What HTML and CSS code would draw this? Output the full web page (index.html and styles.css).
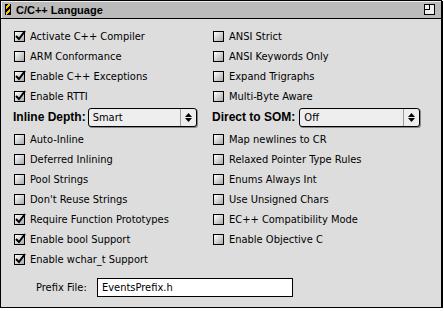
FILE: index.html
```html
<!DOCTYPE html>
<html lang="en">
<head>
  <meta charset="UTF-8">
  <title>C/C++ Language</title>
  <link rel="stylesheet" href="styles.css">
</head>
<body>
  <div class="window">
    <div class="titlebar">
      <span class="grip"></span>
      <span class="title">C/C++ Language</span>
      <span class="zoombox"></span>
    </div>

    <div class="panel">
      <div class="grid">
        <label class="check on"><span class="box"></span>Activate C++ Compiler</label>
        <label class="check"><span class="box"></span>ANSI Strict</label>
        <label class="check"><span class="box"></span>ARM Conformance</label>
        <label class="check"><span class="box"></span>ANSI Keywords Only</label>
        <label class="check on"><span class="box"></span>Enable C++ Exceptions</label>
        <label class="check"><span class="box"></span>Expand Trigraphs</label>
        <label class="check on"><span class="box"></span>Enable RTTI</label>
        <label class="check"><span class="box"></span>Multi-Byte Aware</label>

        <div class="popup-row">
          <span class="popup-label">Inline Depth:</span>
          <div class="popup"><span>Smart</span><span class="arrows"></span></div>
        </div>
        <div class="popup-row som">
          <span class="popup-label">Direct to SOM:</span>
          <div class="popup"><span>Off</span><span class="arrows"></span></div>
        </div>

        <label class="check"><span class="box"></span>Auto-Inline</label>
        <label class="check"><span class="box"></span>Map newlines to CR</label>
        <label class="check"><span class="box"></span>Deferred Inlining</label>
        <label class="check"><span class="box"></span>Relaxed Pointer Type Rules</label>
        <label class="check"><span class="box"></span>Pool Strings</label>
        <label class="check"><span class="box"></span>Enums Always Int</label>
        <label class="check"><span class="box"></span>Don't Reuse Strings</label>
        <label class="check"><span class="box"></span>Use Unsigned Chars</label>
        <label class="check on"><span class="box"></span>Require Function Prototypes</label>
        <label class="check"><span class="box"></span>EC++ Compatibility Mode</label>
        <label class="check on"><span class="box"></span>Enable bool Support</label>
        <label class="check"><span class="box"></span>Enable Objective C</label>
        <label class="check on"><span class="box"></span>Enable wchar_t Support</label>
      </div>

      <div class="prefix">
        <span class="prefix-label">Prefix File:</span>
        <div class="field">EventsPrefix.h</div>
      </div>
    </div>
  </div>
</body>
</html>
```

FILE: styles.css
```css
body {
  margin: 0;
  background: #fff;
  font-family: "DejaVu Sans Condensed", "DejaVu Sans", sans-serif;
  font-size: 11px;
  color: #000;
}
.window {
  width: 440px;
  height: 306px;
  border: 1px solid #000;
  box-shadow: 1px 1px 0 #000;
  background: #dddddd;
  display: flex;
  flex-direction: column;
}
.titlebar {
  height: 17px;
  background: #bbbbbb;
  border-bottom: 1px solid #000;
  display: flex;
  align-items: center;
  padding: 0 4px;
  box-shadow: inset 1px 1px 0 #eee;
}
.grip {
  width: 4px;
  height: 11px;
  margin-right: 5px;
  background: repeating-linear-gradient(135deg, #000 0 2px, #f0c000 2px 4px);
  border-left: 1px solid #000;
  border-right: 1px solid #000;
}
.title {
  font-family: "Liberation Sans", Arial, sans-serif;
  font-weight: bold;
  font-size: 11px;
  flex: 1;
}
.zoombox {
  width: 9px;
  height: 9px;
  border: 1px solid #000;
  background: #eee;
  position: relative;
  margin-right: 2px;
}
.zoombox::after {
  content: "";
  position: absolute;
  left: 0;
  top: 0;
  width: 4px;
  height: 4px;
  border-right: 1px solid #000;
  border-bottom: 1px solid #000;
}
.panel {
  flex: 1;
  padding: 7px 0 0 13px;
}
.grid {
  display: grid;
  grid-template-columns: 199px 217px;
  grid-auto-rows: minmax(20px, auto);
}
.check {
  display: flex;
  align-items: center;
  gap: 5px;
  white-space: nowrap;
}
.box {
  width: 9px;
  height: 9px;
  border: 1px solid #000;
  background: linear-gradient(135deg, #fff, #aaa);
  position: relative;
}
.check.on .box::after {
  content: "";
  position: absolute;
  left: 0;
  top: -2px;
  width: 11px;
  height: 11px;
  background: url("data:image/svg+xml,%3Csvg xmlns='http://www.w3.org/2000/svg' width='11' height='11'%3E%3Cpath d='M1 6 L4 9 L10 1' fill='none' stroke='%23000' stroke-width='2'/%3E%3C/svg%3E") no-repeat;
}
.popup-row {
  display: flex;
  align-items: center;
  height: 20px;
  padding: 1px 0 2px;
  margin-left: -1px;
}
.popup-label {
  font-family: "Liberation Sans", Arial, sans-serif;
  font-size: 12px;
  font-weight: bold;
  margin-right: 2px;
}
.som .popup-label {
  margin-right: 4px;
}
.popup {
  flex: 1;
  margin-right: 16px;
  height: 17px;
  border: 1px solid #000;
  border-radius: 3px;
  background: #eee;
  box-shadow: 1px 1px 0 #888;
  display: flex;
  align-items: center;
  justify-content: space-between;
  padding-left: 4px;
}
.som .popup {
  margin-right: 10px;
}
.arrows {
  width: 15px;
  height: 17px;
  border-left: 1px solid #999;
  background:
    url("data:image/svg+xml,%3Csvg xmlns='http://www.w3.org/2000/svg' width='7' height='9'%3E%3Cpath d='M3.5 0 L7 4 H0 Z M0 5 H7 L3.5 9 Z' fill='%23000'/%3E%3C/svg%3E") center no-repeat;
}
.prefix {
  display: flex;
  align-items: center;
  margin-top: 9px;
  padding-left: 22px;
}
.prefix-label {
  width: 61px;
}
.field {
  width: 190px;
  height: 17px;
  border: 1px solid #000;
  background: #fff;
  padding-left: 4px;
  line-height: 17px;
}
```
